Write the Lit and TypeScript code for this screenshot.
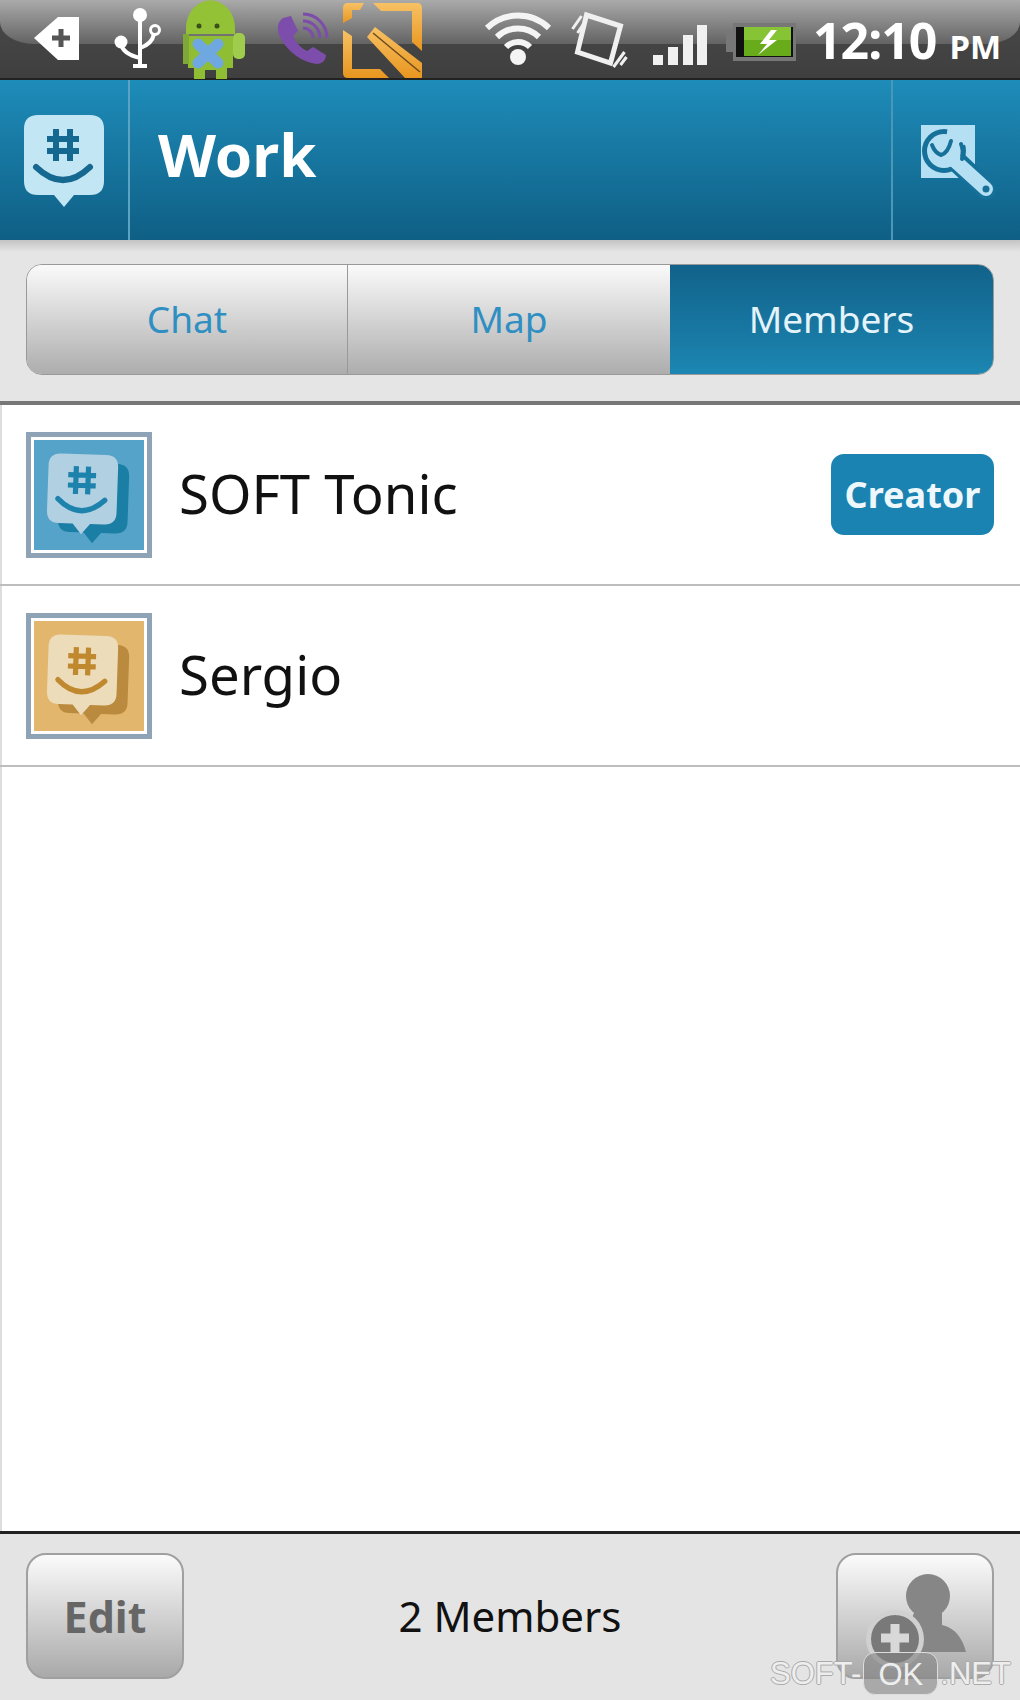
import { LitElement, html, css, svg } from 'lit';
import { customElement } from 'lit/decorators.js';

// speech bubble logo, drawn in a 80x92 box
const bubble = (fill: string, ink: string) => svg`
  <path fill=${fill} d="M14 0H66Q80 0 80 14V66Q80 80 66 80H50L40 92L30 80H14Q0 80 0 66V14Q0 0 14 0Z"/>
  <path fill="none" stroke=${ink} stroke-width="6" d="M32 14V46M46 14V46M23 24H55M23 36H55"/>
  <path fill="none" stroke=${ink} stroke-width="6" stroke-linecap="round" d="M12 52Q39 78 66 52"/>
`;

const members = [
  { name: 'SOFT Tonic', bg: 'blue', creator: true },
  { name: 'Sergio', bg: 'tan', creator: false }
];

@customElement('app-root')
export class AppRoot extends LitElement {
  static styles = css`
    :host {
      display: block;
      width: 1020px;
      height: 1700px;
      font-family: "Noto Sans", "Open Sans", sans-serif;
      background: #fff;
      overflow: hidden;
    }
    .page {
      position: relative;
      display: flex;
      flex-direction: column;
      height: 1700px;
      box-shadow: inset 2px 0 0 #ddd;
    }
    .status {
      position: relative;
      display: flex;
      flex: none;
      height: 80px;
      padding-left: 34px;
      box-sizing: border-box;
      color: #fff;
      background: linear-gradient(180deg, #4a4a4a, #403f3f);
      border-bottom: 2px solid #222;
    }
    .status::before {
      content: "";
      position: absolute;
      left: 0;
      right: 0;
      top: 0;
      height: 44px;
      border-radius: 0 0 34px 34px / 0 0 22px 22px;
      background: linear-gradient(180deg, #aaa, #636363);
    }
    .status svg {
      position: relative;
      flex: none;
      overflow: visible;
    }
    .m15 { margin-left: 15px; }
    .m18 { margin-left: 18px; }
    .m20 { margin-left: 20px; }
    .m24 { margin-left: 24px; }
    .m31 { margin-left: 31px; }
    .m35 { margin-left: 35px; }
    .m63 { margin-left: 63px; }
    .clock {
      position: relative;
      display: flex;
      align-items: baseline;
      gap: 13px;
      margin-left: 16px;
      font-size: 50px;
      font-weight: 700;
      line-height: 80px;
      height: 78px;
      letter-spacing: -1px;
    }
    .clock small {
      font-size: 33px;
      font-weight: 700;
      letter-spacing: 0;
    }
    .bar {
      display: flex;
      flex: none;
      height: 160px;
      box-sizing: border-box;
      color: #fff;
      background: linear-gradient(180deg, #1e8cb9, #0f5f85);
    }
    .logo {
      display: flex;
      justify-content: center;
      padding: 35px 0 0 0;
      box-sizing: border-box;
      width: 130px;
      border-right: 2px solid #5ba3c2;
    }
    .title {
      flex: 1;
      padding-left: 28px;
      font-size: 60px;
      font-weight: 700;
      line-height: 148px;
    }
    .tool {
      width: 129px;
      box-sizing: border-box;
      padding: 43px 0 0 28px;
      border-left: 2px solid #4a97b8;
    }
    .strip {
      flex: none;
      height: 165px;
      box-sizing: border-box;
      padding: 24px 26px 26px;
      background: linear-gradient(180deg, #c4c4c4, #e5e5e5 12px);
      border-bottom: 4px solid #777;
    }
    .tabs {
      display: grid;
      grid-template-columns: 320px 323px 1fr;
      height: 111px;
      box-sizing: border-box;
      border: 1px solid #999;
      border-radius: 16px;
      overflow: hidden;
    }
    .tab {
      display: flex;
      align-items: center;
      justify-content: center;
      padding-bottom: 2px;
      font-size: 37px;
      color: #2f8fc2;
      background: linear-gradient(180deg, #fafafa, #adadad);
    }
    .tab + .tab {
      border-left: 1px solid #999;
    }
    .tab.on {
      color: #e4f3f9;
      border-left: none;
      background: linear-gradient(180deg, #11628a, #1c86b2);
    }
    .list {
      flex: 1;
    }
    .row {
      display: flex;
      align-items: center;
      height: 181px;
      box-sizing: border-box;
      padding: 0 26px;
      border-bottom: 2px solid #bdbdbd;
    }
    .avatar {
      flex: none;
      width: 126px;
      height: 126px;
      box-sizing: border-box;
      padding: 3px;
      background: #fff;
      border: 5px solid #8fa3b7;
    }
    .avatar svg {
      display: block;
    }
    .avatar.blue svg {
      background: #55a3c9;
    }
    .avatar.tan svg {
      background: #e2b66c;
    }
    .name {
      flex: 1;
      margin: 0 0 3px 27px;
      font-size: 54.5px;
      color: #111;
    }
    .badge {
      width: 163px;
      height: 81px;
      border-radius: 13px;
      font-size: 36px;
      font-weight: 700;
      line-height: 82px;
      text-align: center;
      color: #eef7fb;
      background: #1a83b1;
    }
    .foot {
      display: flex;
      flex: none;
      align-items: flex-start;
      justify-content: space-between;
      height: 169px;
      box-sizing: border-box;
      padding: 19px 26px 0;
      background: #e4e4e4;
      border-top: 3px solid #222;
    }
    .btn {
      display: flex;
      align-items: center;
      justify-content: center;
      width: 158px;
      height: 126px;
      box-sizing: border-box;
      border: 2px solid #a0a0a0;
      border-radius: 20px;
      font-size: 43px;
      font-weight: 700;
      color: #666;
      background: linear-gradient(180deg, #fbfbfb, #a9a9a9);
    }
    .count {
      font-size: 42px;
      line-height: 126px;
      color: #111;
    }
    .mark {
      position: absolute;
      left: 770px;
      top: 1652px;
      display: flex;
      align-items: center;
      height: 43px;
      font-family: "Liberation Sans", Arial, sans-serif;
      font-size: 31px;
      color: #eee;
      text-shadow: -1px 0 #aaa, 1px 0 #aaa, 0 -1px #aaa, 0 1px #aaa;
    }
    .mark b {
      display: block;
      width: 75px;
      height: 43px;
      margin: 0 2px 0 2px;
      border-radius: 12px;
      font-weight: 400;
      line-height: 43px;
      text-align: center;
      background: rgba(130, 130, 130, 0.6);
      border: 1px solid #ddd;
      box-sizing: border-box;
      text-shadow: none;
    }
  `;

  renderStatus() {
    return html`
      <div class="status">
        <svg width="45" height="80" viewBox="34 0 45 80">
          <path fill="#fff" d="M34 38L58 17H79V60H58Z"/>
          <path stroke="#555" stroke-width="5" d="M61 29V47M52 38H70"/>
        </svg>
        <svg class="m35" width="48" height="80" viewBox="114 0 48 80" fill="none" stroke="#fff">
          <circle cx="140" cy="15" r="7" fill="#fff" stroke="none"/>
          <circle cx="121" cy="42" r="6.5" fill="#fff" stroke="none"/>
          <circle cx="155" cy="30" r="4.5" stroke-width="3"/>
          <path stroke-width="4" d="M140 18V66M121 44Q123 54 140 58M154 34Q152 44 140 48M133 66H147"/>
        </svg>
        <svg class="m20" width="63" height="80" viewBox="182 0 63 80">
          <path fill="#93c236" d="M186 28A23 26 0 0 1 235 28V34H186Z"/>
          <path fill="#8fbd34" d="M188 36H233V68H227V79H216V70H205V79H194V68H188Z"/>
          <rect x="183" y="34" width="6" height="30" fill="#7fa836"/>
          <rect x="233" y="33" width="12" height="26" rx="5" fill="#9fcc4c"/>
          <circle cx="199" cy="26" r="2.5" fill="#38501a"/>
          <circle cx="217" cy="26" r="2.5" fill="#38501a"/>
          <path stroke="#6fa8e0" stroke-width="11" stroke-linecap="round" d="M198 44L218 63M218 44L198 63"/>
        </svg>
        <svg class="m31" width="52" height="80" viewBox="276 0 52 80">
          <path fill="#7d4dab" d="M283 18C277 22 276 30 281 39C289 53 302 62 317 64C322 64 326 60 326 55L313 47L307 51C301 48 296 43 293 36L298 31L291 16Z"/>
          <path fill="none" stroke="#7d4dab" stroke-width="3" d="M303 28A10 10 0 0 1 313 38M303 21A17 17 0 0 1 320 38M303 14A24 24 0 0 1 327 38"/>
        </svg>
        <svg class="m15" width="79" height="80" viewBox="343 0 79 80">
          <defs>
            <linearGradient id="og" x1="0" y1="0" x2="0" y2="1">
              <stop offset="0" stop-color="#f7c164"/>
              <stop offset="1" stop-color="#e8961f"/>
            </linearGradient>
          </defs>
          <path fill="url(#og)" d="M348 3H364L360 10H352V18L343 23V8Q343 3 348 3Z"/>
          <path fill="url(#og)" d="M343 30L352 36V69H380L389 78H348Q343 78 343 73Z"/>
          <path fill="url(#og)" d="M373 3H417Q422 3 422 8V51L412 42V11H381Z"/>
          <path fill="url(#og)" d="M375 27L422 63V78H405L367 37Z"/>
          <path stroke="#6b4a1c" stroke-width="1.5" d="M373 33L420 72"/>
        </svg>
        <svg class="m63" width="66" height="80" viewBox="485 0 66 80" fill="none" stroke="#f4f4f4" stroke-width="6">
          <circle cx="518" cy="57" r="8" fill="#f4f4f4" stroke="none"/>
          <path d="M506 47A17 17 0 0 1 530 47M497 37A30 30 0 0 1 539 37M487 28A45 45 0 0 1 549 28"/>
        </svg>
        <svg class="m20" width="57" height="80" viewBox="568 0 56 80" fill="none" stroke="#f0f0f0">
          <path stroke-width="5" d="M583 15L617 26L607 63L574 52Z"/>
          <path stroke-width="3" d="M569 29L578 16M574 33L580 24M610 67L621 52M617 65L623 57"/>
        </svg>
        <svg class="m24" width="56" height="80" viewBox="646 0 56 80" fill="#f0f0f0">
          <rect x="647" y="55" width="10" height="10"/>
          <rect x="662" y="47" width="10" height="18"/>
          <rect x="677" y="35" width="10" height="30"/>
          <rect x="691" y="25" width="10" height="40"/>
        </svg>
        <svg class="m18" width="71" height="80" viewBox="717 0 71 80">
          <rect x="724" y="23" width="63" height="38" fill="#777"/>
          <path fill="#777" d="M717 32H724V52H717Z"/>
          <rect x="727" y="27" width="57" height="30" fill="#111"/>
          <rect x="735" y="27" width="47" height="29" fill="#68ac1c"/>
          <rect x="735" y="27" width="47" height="13" fill="#86c436"/>
          <path fill="#fff" d="M762 30L751 44H758L749 55L768 40H760L768 30Z"/>
        </svg>
        <div class="clock">12:10<small>PM</small></div>
      </div>
    `;
  }

  renderAvatar(bg: string) {
    const tan = bg === 'tan';
    const face = tan ? '#ecdcb9' : '#b1d0e2';
    const ink = tan ? '#c0882f' : '#1e83ac';
    const shade = tan ? '#ba8a3e' : '#1b7ea5';
    return html`
      <div class="avatar ${bg}">
        <svg width="110" height="110" viewBox="0 0 110 110">
          <g transform="translate(26 22) rotate(2) scale(0.87)">
            <path fill=${shade} d="M14 0H66Q80 0 80 14V66Q80 80 66 80H50L40 92L30 80H14Q0 80 0 66V14Q0 0 14 0Z"/>
          </g>
          <g transform="translate(15 13) rotate(2) scale(0.87)">${bubble(face, ink)}</g>
        </svg>
      </div>
    `;
  }

  render() {
    return html`
      <div class="page">
        ${this.renderStatus()}
        <header class="bar">
          <div class="logo">
            <svg width="80" height="92" viewBox="0 0 80 92">${bubble('#c3e6f5', '#15688f')}</svg>
          </div>
          <div class="title">Work</div>
          <div class="tool">
            <svg width="76" height="78" viewBox="0 0 76 78">
              <path fill="#b5e0f3" d="M0 2H54V55H0Z"/>
              <path stroke="#16719a" stroke-width="21" stroke-linecap="round" d="M35 38L65 66"/>
              <circle cx="23" cy="28" r="22" fill="#16719a"/>
              <circle cx="23" cy="28" r="17" fill="#b5e0f3"/>
              <path stroke="#b5e0f3" stroke-width="14" stroke-linecap="round" d="M33 37L65 66"/>
              <path fill="#b5e0f3" d="M23 28L27 3H52V19L37 24Z"/>
              <path fill="none" stroke="#16719a" stroke-width="4" stroke-linecap="round" d="M40 21Q43 28 41 36"/>
              <path fill="none" stroke="#16719a" stroke-width="4" stroke-linecap="round" d="M11 22Q14 30 20 32Q27 30 30 18"/>
              <circle cx="65" cy="66" r="3.5" fill="#16719a"/>
            </svg>
          </div>
        </header>
        <div class="strip">
          <div class="tabs">
            <div class="tab">Chat</div>
            <div class="tab">Map</div>
            <div class="tab on">Members</div>
          </div>
        </div>
        <div class="list">
          ${members.map(m => html`
            <div class="row">
              ${this.renderAvatar(m.bg)}
              <div class="name">${m.name}</div>
              ${m.creator ? html`<div class="badge">Creator</div>` : ''}
            </div>
          `)}
        </div>
        <footer class="foot">
          <div class="btn">Edit</div>
          <div class="count">2 Members</div>
          <div class="btn">
            <svg width="154" height="122" viewBox="0 0 154 122">
              <circle cx="90" cy="41" r="22" fill="#868686"/>
              <path fill="#868686" d="M76 58H104V70Q122 74 128 97H60Z"/>
              <circle cx="57" cy="84" r="29" fill="#d0d0d0"/>
              <circle cx="57" cy="84" r="24" fill="#797979"/>
              <path stroke="#d8d8d8" stroke-width="9" d="M57 69V97M43 83H71"/>
            </svg>
          </div>
        </footer>
        <div class="mark">SOFT-<b>OK</b>.NET</div>
      </div>
    `;
  }
}
